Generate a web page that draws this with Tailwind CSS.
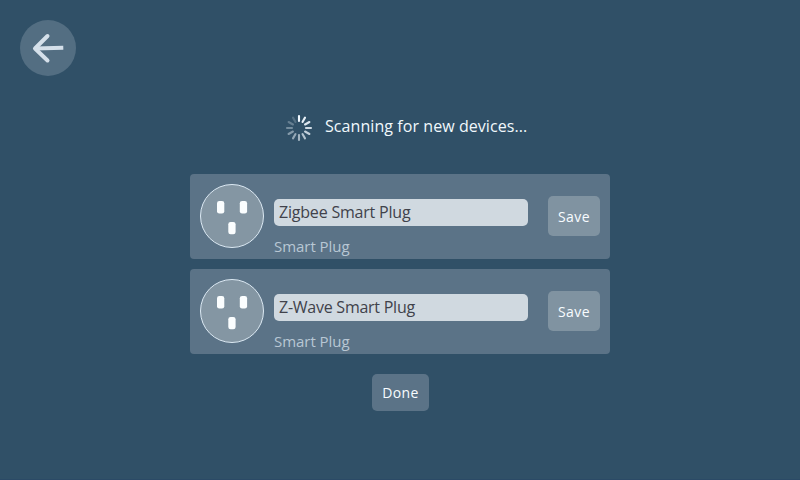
<!DOCTYPE html>
<html lang="en">
<head>
<meta charset="utf-8">
<title>Add devices</title>
<script src="https://cdn.jsdelivr.net/npm/@tailwindcss/browser@4"></script>
</head>
<body class="w-[800px] h-[480px] overflow-hidden bg-[#305067] font-['Open_Sans','Noto_Sans',sans-serif] text-white">
<div class="h-full flex flex-col border-b border-[#2b4a66]">
  <header class="h-[96px] p-5 shrink-0">
    <button class="size-14 rounded-full bg-[#536e82] flex items-center justify-center" aria-label="Back">
      <svg class="size-14" viewBox="0 0 56 56" fill="none" stroke="#d5e0ea" stroke-width="4" stroke-linecap="round" stroke-linejoin="round"><path d="M27.5 16 15 28.5 27.5 40.5"/><path stroke-linecap="butt" d="M15 28.4 43.3 27.8"/></svg>
    </button>
  </header>
  <main class="w-[420px] ml-[190px] flex flex-col">
    <div class="h-[78px] pt-[17px] pl-[95px] flex items-start">
      <svg class="size-7 mt-[1px] shrink-0" viewBox="-14 -14 28 28" stroke="#f0f8ff" stroke-width="2.1" stroke-linecap="round">
        <path d="M0-7V-12"/>
        <path d="M0-7V-12" transform="rotate(30)" opacity=".95"/>
        <path d="M0-7V-12" transform="rotate(60)" opacity=".9"/>
        <path d="M0-7V-12" transform="rotate(90)" opacity=".83"/>
        <path d="M0-7V-12" transform="rotate(120)" opacity=".76"/>
        <path d="M0-7V-12" transform="rotate(150)" opacity=".68"/>
        <path d="M0-7V-12" transform="rotate(180)" opacity=".6"/>
        <path d="M0-7V-12" transform="rotate(210)" opacity=".52"/>
        <path d="M0-7V-12" transform="rotate(240)" opacity=".44"/>
        <path d="M0-7V-12" transform="rotate(270)" opacity=".36"/>
        <path d="M0-7V-12" transform="rotate(300)" opacity=".28"/>
        <path d="M0-7V-12" transform="rotate(330)" opacity=".2"/>
      </svg>
      <p class="ml-3 mt-[1px] text-[16px] leading-6 tracking-[0.07px] whitespace-nowrap text-[#f0f8fc]">Scanning for new devices...</p>
    </div>
    <div class="flex flex-col gap-[10px]">
      <section class="h-[85px] rounded bg-[#5b7387] flex px-[10px]">
        <svg class="size-16 mt-[10px] shrink-0" viewBox="0 0 64 64"><circle cx="32" cy="32" r="31.5" fill="#8496a3" stroke="#dce9f3"/><g fill="#fbfeff"><rect x="17" y="17" width="7.3" height="12.5" rx="2.3"/><rect x="39.8" y="17" width="7.3" height="12.5" rx="2.3"/><rect x="28.3" y="38" width="7.3" height="12.3" rx="2.3"/></g></svg>
        <div class="ml-[10px] w-[254px] pt-[25px]">
          <div class="h-[27px] rounded-[5px] bg-[#d0d9e0] pl-[5px] text-[16px] leading-[27px] text-[#40424b] whitespace-nowrap"><span class="tracking-[-0.2px]">Zigbee Smart Plug</span></div>
          <div class="mt-[9px] text-[15px] leading-[22px] tracking-[-0.05px] text-[#b8c7d4]">Smart Plug</div>
        </div>
        <button class="ml-5 mt-[22px] w-[52px] h-10 rounded-[5px] bg-[#8093a1] text-[14px] font-medium tracking-[0.4px] leading-10 pt-px text-[#f8fcff]">Save</button>
      </section>
      <section class="h-[85px] rounded bg-[#5b7387] flex px-[10px]">
        <svg class="size-16 mt-[10px] shrink-0" viewBox="0 0 64 64"><circle cx="32" cy="32" r="31.5" fill="#8496a3" stroke="#dce9f3"/><g fill="#fbfeff"><rect x="17" y="17" width="7.3" height="12.5" rx="2.3"/><rect x="39.8" y="17" width="7.3" height="12.5" rx="2.3"/><rect x="28.3" y="38" width="7.3" height="12.3" rx="2.3"/></g></svg>
        <div class="ml-[10px] w-[254px] pt-[25px]">
          <div class="h-[27px] rounded-[5px] bg-[#d0d9e0] pl-[5px] text-[16px] leading-[27px] text-[#40424b] whitespace-nowrap"><span class="tracking-[-0.25px]">Z-Wave Smart Plug</span></div>
          <div class="mt-[9px] text-[15px] leading-[22px] tracking-[-0.05px] text-[#b8c7d4]">Smart Plug</div>
        </div>
        <button class="ml-5 mt-[22px] w-[52px] h-10 rounded-[5px] bg-[#8093a1] text-[14px] font-medium tracking-[0.4px] leading-10 pt-px text-[#f8fcff]">Save</button>
      </section>
    </div>
    <button class="mt-5 ml-[182px] w-[57px] h-[37px] rounded-[5px] bg-[#5b7387] text-[14px] font-medium tracking-[0.4px] text-[#f8fcff]">Done</button>
  </main>
</div>
</body>
</html>
